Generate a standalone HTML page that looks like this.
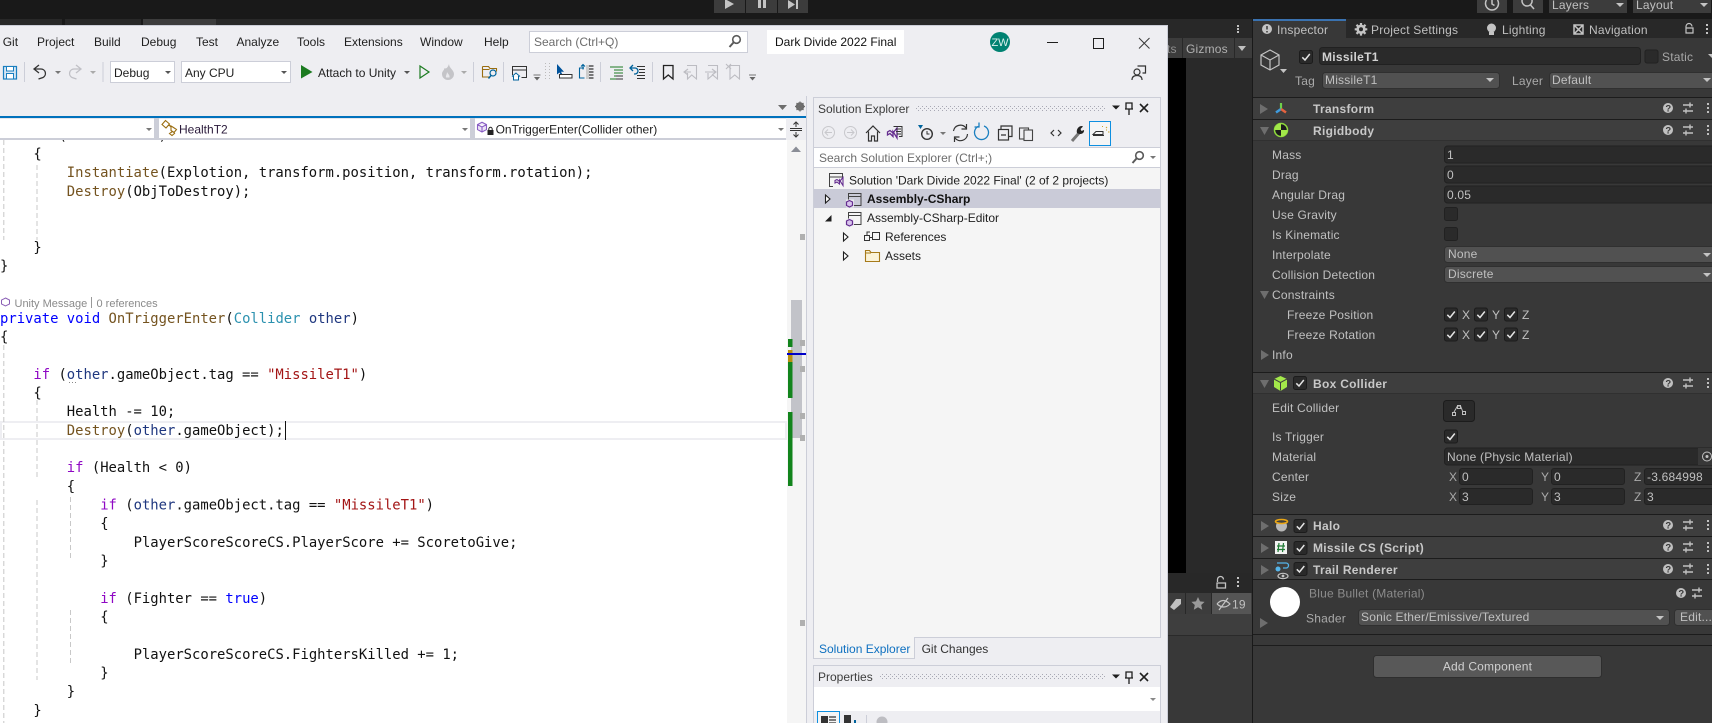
<!DOCTYPE html>
<html><head><meta charset="utf-8"><title>Unity and Visual Studio</title>
<style>
html,body{margin:0;padding:0;background:#191919;width:1712px;height:723px;overflow:hidden}
svg{display:block;position:absolute;left:0;top:0}
text{white-space:pre;font-family:"Liberation Sans",sans-serif;font-size:12px}
.v{fill:#1e1e1e}
.g{fill:#6d6d6d}
.u{fill:#c0c0c0;letter-spacing:.2px}
.b{font-weight:bold;fill:#c8c8c8;letter-spacing:.3px}
.c{font-family:"DejaVu Sans Mono","Liberation Mono",monospace;font-size:13.87px;fill:#111}
.m{fill:#74531f}.k{fill:#0000ff}.p{fill:#8f08c4}.t{fill:#2b91af}.s{fill:#a31515}.a{fill:#1f377f}
</style></head><body>
<svg width="1712" height="723" viewBox="0 0 1712 723">
<defs>
<g id="hdr"><circle cx="1668" cy="0" r="5" fill="#c0c0c0"/><text x="1665.4" y="3.6" fill="#383838" style="font-size:9.5px;font-weight:bold">?</text>
<path d="M1683 -3h10M1683 3h10M1690 -5.5v5M1686 .5v5" stroke="#c0c0c0" stroke-width="1.4" fill="none"/>
<path d="M1708 -5v2M1708 -1v2M1708 3v2" stroke="#c0c0c0" stroke-width="2"/></g>
<g id="cb"><rect x=".5" y=".5" width="13" height="13" rx="2" fill="#2a2a2a" stroke="#1c1c1c"/><path d="M3.3 7.3L6 10 10.8 4" fill="none" stroke="#e4e4e4" stroke-width="1.5"/></g>
<g id="panelbtns"><path d="M0 -2.5h8l-4 4z" fill="#1e1e1e"/><path d="M14 -5h6v6h-6zM17 1v6M13 1h8" fill="none" stroke="#1e1e1e" stroke-width="1.3"/><path d="M28 -4l8 8M36 -4l-8 8" stroke="#1e1e1e" stroke-width="1.6"/></g>
<pattern id="dots" width="4" height="4" patternUnits="userSpaceOnUse"><rect width="1" height="1" fill="#a8a8b4"/><rect x="2" y="2" width="1" height="1" fill="#a8a8b4"/></pattern>
<g id="proj"><rect x="3.5" y="-4.5" width="12.500" height="12" fill="none" stroke="#424242"/><path d="M3.500 -1.500h12.500" stroke="#424242"/><rect x="1" y="1.500" width="8" height="8" fill="#eeeef2" opacity=".9"/><path d="M4.500 2.500l3 1.500v3.500l-3 1.500-3-1.500V4z" fill="#d8c4ec" stroke="#652d90" stroke-width="1.200"/></g>
<g id="fold"><path d="M0 0h4l1.500 2H14v9H0zM0 2.500h5.500" fill="#fbf3d8" stroke="#a67a1a" stroke-width="1.100"/></g>
<clipPath id="insp"><rect x="1253" y="0" width="459" height="723"/></clipPath>
<clipPath id="top"><rect x="0" y="0" width="1712" height="13"/></clipPath>
<clipPath id="code"><rect x="0" y="140" width="787" height="583"/></clipPath>
</defs>

<!-- Unity background -->
<rect width="1712" height="723" fill="#191919"/>
<g fill="#3c3c3c">
<rect x="714" y="0" width="31" height="13"/><rect x="746" y="0" width="31" height="13"/><rect x="778" y="0" width="30" height="13"/>
<rect x="1477" y="0" width="30" height="13"/><rect x="1513" y="0" width="30" height="13"/><rect x="1549" y="0" width="78" height="13"/><rect x="1633" y="0" width="78" height="13"/>
</g>
<path d="M725 -1l9 5-9 5z" fill="#c4c4c4"/>
<path d="M758 0h3v8h-3zM763 0h3v8h-3z" fill="#c4c4c4"/>
<path d="M788 0l7 4.500-7 4.500zM796 0h2v9h-2z" fill="#c4c4c4"/>
<path d="M1486.500 0a6.500 6.500 0 1 0 11 0M1492 0v4l2.500 1.500" fill="none" stroke="#c4c4c4" stroke-width="1.500"/>
<path d="M1527 -4a5 5 0 1 0 .1 0M1530.500 5l3.500 4" fill="none" stroke="#c4c4c4" stroke-width="1.500"/>
<g clip-path="url(#top)">
<text x="1552" y="9" class="u">Layers</text><text x="1636" y="9" class="u">Layout</text>
</g>
<path d="M1616 3h8l-4 4zM1700 3h8l-4 4z" fill="#c4c4c4"/>
<rect x="0" y="19" width="62" height="6" fill="#282828"/><rect x="65" y="19" width="76" height="6" fill="#282828"/><rect x="143" y="19" width="73" height="6" fill="#3c3c3c"/>
<rect x="216" y="19" width="1036" height="6" fill="#282828"/>

<rect x="1168" y="25" width="84" height="13" fill="#282828"/>
<path d="M1238 25v2M1238 28v2M1238 31v2" stroke="#c0c0c0" stroke-width="2"/>
<rect x="1168" y="38" width="84" height="20" fill="#3c3c3c"/>
<rect x="1168" y="58" width="18" height="515" fill="#000"/>
<rect x="1186" y="58" width="66" height="515" fill="#292929"/>
<path d="M1182.500 38v20M1234.500 38v20" stroke="#282828"/>
<text x="1167" y="53" class="u" style="fill:#8e8e8e">ts</text>
<text x="1186" y="53" class="u" style="fill:#b0b0b0">Gizmos</text>
<path d="M1238 46h8l-4 5z" fill="#c0c0c0"/>
<rect x="1168" y="573" width="84" height="150" fill="#383838"/>
<rect x="1168" y="573" width="84" height="20" fill="#282828"/>
<path d="M1217.500 582v-2.500a3 3 0 0 1 6 0M1217 583h8.500v5H1217z" fill="none" stroke="#c4c4c4" stroke-width="1.300"/>
<path d="M1238 577v2M1238 581v2M1238 585v2" stroke="#c4c4c4" stroke-width="2"/>
<rect x="1168" y="593" width="84" height="21" fill="#3c3c3c"/>
<path d="M1185.500 593v21M1211.500 593v21" stroke="#282828"/>
<rect x="1212" y="593" width="39" height="21" fill="#555"/>
<path d="M1170 607l6-8h5v5l-7 6z" fill="#c0c0c0"/>
<path d="M1198 597l2 4.400 4.600.5-3.400 3.100 1 4.700-4.200-2.400-4.200 2.400 1-4.700-3.400-3.100 4.600-.5z" fill="#9a9a9a"/>
<path d="M1217 604q6-7 13 0q-6 6-13 0M1219 610l9-12" fill="none" stroke="#c4c4c4" stroke-width="1.200"/>
<text x="1232" y="608.500" class="u">19</text>
<rect x="1168" y="614" width="84" height="21" fill="#3e3e3e"/>
<path d="M1168 635.500h84" stroke="#2a2a2a"/>

<!-- Inspector -->
<rect x="1252" y="0" width="1" height="723" fill="#191919"/>
<g clip-path="url(#insp)">
<rect x="1253" y="19" width="459" height="704" fill="#383838"/>
<rect x="1253" y="19" width="459" height="19" fill="#282828"/>
<rect x="1253" y="20" width="93" height="18" fill="#383838"/>
<rect x="1253" y="19" width="93" height="2" fill="#3a72b0"/>
<circle cx="1267" cy="29" r="5" fill="#c4c4c4"/><path d="M1267 26v3.500M1267 31v1.500" stroke="#383838" stroke-width="1.500"/>
<text x="1277" y="34" class="u">Inspector</text>
<path d="M1361 23v12.600M1354.700 29.300h12.600M1356.500 24.800l9 9M1365.500 24.800l-9 9" stroke="#c4c4c4" stroke-width="2.200"/>
<circle cx="1361" cy="29.300" r="4.700" fill="#c4c4c4"/><circle cx="1361" cy="29.300" r="2" fill="#282828"/>
<text x="1371" y="34" class="u">Project Settings</text>
<circle cx="1491.500" cy="28" r="4.500" fill="#c4c4c4"/><rect x="1489" y="32" width="5" height="3" fill="#c4c4c4"/>
<text x="1502" y="34" class="u">Lighting</text>
<path d="M1574 25v9h9v-9zM1574 25l9 9M1583 25l-9 9" fill="none" stroke="#c4c4c4" stroke-width="1.500"/>
<text x="1589" y="34" class="u">Navigation</text>
<path d="M1686 28v-1.500a3 3 0 0 1 6 0M1686 28h7v5h-7z" fill="none" stroke="#c4c4c4" stroke-width="1.200"/>
<path d="M1707 24v2M1707 28v2M1707 32v2" stroke="#c4c4c4" stroke-width="2"/>

<path d="M1270 50l9 5v10l-9 5-9-5V55zM1261 55l9 5 9-5M1270 60v10" fill="none" stroke="#c4c4c4" stroke-width="1.200"/>
<path d="M1280 69h7l-3.500 4z" fill="#c4c4c4"/>
<use href="#cb" x="1299" y="50"/>
<rect x="1319.500" y="47.500" width="321" height="17" rx="3" fill="#2a2a2a" stroke="#212121"/>
<text x="1322" y="61" class="b" style="fill:#d2d2d2">MissileT1</text>
<rect x="1645" y="50" width="13" height="13" rx="2" fill="#2a2a2a" stroke="#212121"/>
<text x="1662" y="61" class="u" style="fill:#a8a8a8">Static</text>
<path d="M1708 54h8l-4 4z" fill="#c4c4c4"/>
<text x="1295" y="85" class="u" style="fill:#aaa">Tag</text>
<rect x="1322.500" y="72.500" width="177" height="16" rx="3" fill="#515151" stroke="#303030"/>
<text x="1325" y="84" class="u">MissileT1</text><path d="M1486 78h8l-4 4z" fill="#c4c4c4"/>
<text x="1512" y="85" class="u" style="fill:#aaa">Layer</text>
<rect x="1549.500" y="72.500" width="170" height="16" rx="3" fill="#515151" stroke="#303030"/>
<text x="1552" y="84" class="u">Default</text><path d="M1703 78h8l-4 4z" fill="#c4c4c4"/>

<g fill="#3e3e3e">
<rect x="1253" y="98" width="459" height="21"/><rect x="1253" y="120" width="459" height="20"/>
<rect x="1253" y="373" width="459" height="20"/><rect x="1253" y="515" width="459" height="21"/>
<rect x="1253" y="537" width="459" height="21"/><rect x="1253" y="559" width="459" height="20"/>
</g>
<path d="M1253 97.500h459M1253 119.500h459M1253 372.500h459M1253 514.500h459M1253 536.500h459M1253 558.500h459M1253 579.500h459M1253 634.500h459M1253 645.500h459" stroke="#1c1c1c"/>
<path d="M1253 140.500h459M1253 393.500h459" stroke="#303030"/>

<path d="M1260 104l8 5-8 5z" fill="#6e6e6e"/>
<path d="M1281 109v-6" stroke="#6fd14a" stroke-width="2.200"/><path d="M1281 109l-5 3.500" stroke="#3f9bdd" stroke-width="2.500"/><path d="M1281 109l5 3.500" stroke="#e4633f" stroke-width="2.500"/>
<text x="1313" y="113" class="b">Transform</text><use href="#hdr" y="108"/>
<path d="M1260 127h9l-4.500 8z" fill="#6e6e6e"/>
<circle cx="1281" cy="130" r="6.500" fill="#1c1c1c" stroke="#8fdc3c" stroke-width="1.500"/>
<path d="M1281 130v-6.500a6.500 6.500 0 0 0-6.500 6.500zM1281 130v6.500a6.500 6.500 0 0 0 6.500-6.500z" fill="#a3e84a"/>
<text x="1313" y="135" class="b">Rigidbody</text><use href="#hdr" y="130"/>

<text x="1272" y="159" class="u">Mass</text><text x="1272" y="179" class="u">Drag</text><text x="1272" y="199" class="u">Angular Drag</text><text x="1272" y="219" class="u">Use Gravity</text><text x="1272" y="239" class="u">Is Kinematic</text>
<g fill="#2a2a2a" stroke="#212121">
<rect x="1444.500" y="146" width="290" height="17" rx="3"/><rect x="1444.500" y="166" width="290" height="17" rx="3"/><rect x="1444.500" y="186" width="290" height="17" rx="3"/>
<rect x="1444.500" y="207.500" width="13" height="13" rx="2"/><rect x="1444.500" y="227.500" width="13" height="13" rx="2"/>
</g>
<text x="1447" y="159" class="u">1</text><text x="1447" y="179" class="u">0</text><text x="1447" y="199" class="u">0.05</text>
<text x="1272" y="259" class="u">Interpolate</text><text x="1272" y="279" class="u">Collision Detection</text>
<rect x="1444.500" y="246.500" width="290" height="16" rx="3" fill="#515151" stroke="#303030"/><rect x="1444.500" y="266.500" width="290" height="16" rx="3" fill="#515151" stroke="#303030"/>
<text x="1448" y="258" class="u">None</text><text x="1448" y="278" class="u">Discrete</text>
<path d="M1703 253h8l-4 4zM1703 273h8l-4 4z" fill="#c4c4c4"/>
<path d="M1260 291h9l-4.500 8z" fill="#6e6e6e"/><text x="1272" y="299" class="u">Constraints</text>
<text x="1287" y="319" class="u">Freeze Position</text><text x="1287" y="339" class="u">Freeze Rotation</text>
<use href="#cb" x="1444" y="307.500"/><use href="#cb" x="1474" y="307.500"/><use href="#cb" x="1504" y="307.500"/>
<use href="#cb" x="1444" y="327.500"/><use href="#cb" x="1474" y="327.500"/><use href="#cb" x="1504" y="327.500"/>
<text x="1462" y="319" class="u">X</text><text x="1492" y="319" class="u">Y</text><text x="1522" y="319" class="u">Z</text><text x="1462" y="339" class="u">X</text><text x="1492" y="339" class="u">Y</text><text x="1522" y="339" class="u">Z</text>
<path d="M1261 350l8 5-8 5z" fill="#6e6e6e"/><text x="1272" y="359" class="u">Info</text>

<path d="M1260 380h9l-4.500 8z" fill="#6e6e6e"/>
<path d="M1280.500 376l6.500 3v8l-6.500 4-6.500-4v-8z" fill="#a3e84a"/><path d="M1274 379l6.500 3.500 6.500-3.500M1280.500 382.500v8" stroke="#3e3e3e" fill="none"/>
<use href="#cb" x="1293" y="376"/><text x="1313" y="388" class="b">Box Collider</text><use href="#hdr" y="383"/>
<text x="1272" y="412" class="u">Edit Collider</text>
<rect x="1443.500" y="400.500" width="31" height="21" rx="3" fill="#2a2a2a" stroke="#1c1c1c"/>
<path d="M1454 412l3.500-6h3l2 5" fill="none" stroke="#c0c0c0"/><path d="M1452.500 412.500h3v3h-3zM1457.500 405.500h3v3h-3zM1462.500 411.500h3v3h-3z" fill="none" stroke="#c0c0c0"/>
<text x="1272" y="441" class="u">Is Trigger</text><use href="#cb" x="1444" y="429.500"/>
<text x="1272" y="461" class="u">Material</text>
<rect x="1444.500" y="448" width="290" height="17" rx="3" fill="#2a2a2a" stroke="#212121"/><rect x="1698" y="448" width="14" height="17" fill="#383838"/>
<text x="1447" y="461" class="u">None (Physic Material)</text>
<circle cx="1707" cy="456.500" r="4.500" fill="none" stroke="#c4c4c4"/><circle cx="1707" cy="456.500" r="1.500" fill="#c4c4c4"/>
<text x="1272" y="481" class="u">Center</text><text x="1272" y="501" class="u">Size</text>
<g fill="#2a2a2a" stroke="#212121">
<rect x="1459.500" y="468.500" width="73" height="16" rx="2.500"/><rect x="1551.500" y="468.500" width="73" height="16" rx="2.500"/><rect x="1644.500" y="468.500" width="80" height="16" rx="2.500"/>
<rect x="1459.500" y="488.500" width="73" height="16" rx="2.500"/><rect x="1551.500" y="488.500" width="73" height="16" rx="2.500"/><rect x="1644.500" y="488.500" width="80" height="16" rx="2.500"/>
</g>
<text x="1449" y="481" class="u" style="fill:#aaa">X</text><text x="1541" y="481" class="u" style="fill:#aaa">Y</text><text x="1634" y="481" class="u" style="fill:#aaa">Z</text>
<text x="1449" y="501" class="u" style="fill:#aaa">X</text><text x="1541" y="501" class="u" style="fill:#aaa">Y</text><text x="1634" y="501" class="u" style="fill:#aaa">Z</text>
<text x="1462" y="481" class="u">0</text><text x="1554" y="481" class="u">0</text><text x="1647" y="481" class="u">-3.684998</text>
<text x="1462" y="501" class="u">3</text><text x="1554" y="501" class="u">3</text><text x="1647" y="501" class="u">3</text>

<path d="M1261 521l8 5-8 5zM1261 543l8 5-8 5zM1261 565l8 5-8 5z" fill="#6e6e6e"/>
<circle cx="1281.500" cy="526" r="5.500" fill="#b8b8b8"/><ellipse cx="1281.500" cy="521.500" rx="6" ry="2" fill="#3e3e3e" stroke="#eaa614" stroke-width="1.600"/>
<rect x="1275" y="541" width="12" height="13" fill="#f2f2f2"/><path d="M1279 543l-1 9M1283.500 543l-1 9M1277 546h8M1277 549.500h8" stroke="#1f7a34" stroke-width="1.200"/>
<path d="M1277 563h9a2.500 2.500 0 0 1 0 5h-3" fill="none" stroke="#55b5ea" stroke-width="1.300"/><circle cx="1278" cy="569" r="2.500" fill="#55b5ea"/><ellipse cx="1283" cy="576" rx="5" ry="2.700" fill="none" stroke="#c4c4c4" stroke-width="1.200"/><circle cx="1283" cy="576" r="1.400" fill="#c4c4c4"/>
<use href="#cb" x="1293.500" y="519"/><use href="#cb" x="1293.500" y="541"/><use href="#cb" x="1293.500" y="562"/>
<text x="1313" y="530" class="b">Halo</text><text x="1313" y="552" class="b">Missile CS (Script)</text><text x="1313" y="574" class="b">Trail Renderer</text>
<use href="#hdr" y="525"/><use href="#hdr" y="547"/><use href="#hdr" y="569"/>

<circle cx="1285" cy="602" r="15" fill="#fff"/>
<path d="M1260 618l8 5-8 5z" fill="#6e6e6e"/>
<text x="1309" y="597.500" class="u" style="fill:#8c8c8c">Blue Bullet (Material)</text>
<text x="1306" y="622.500" class="u" style="fill:#aaa">Shader</text>
<rect x="1358.500" y="609.500" width="311" height="16" rx="3" fill="#515151" stroke="#303030"/>
<text x="1361" y="621" class="u">Sonic Ether/Emissive/Textured</text><path d="M1656 616h8l-4 4z" fill="#c4c4c4"/>
<rect x="1674.500" y="609.500" width="50" height="16" rx="3" fill="#515151" stroke="#303030"/>
<text x="1680" y="621" class="u">Edit...</text>
<circle cx="1681" cy="593" r="5" fill="#c0c0c0"/><text x="1678.400" y="596.500" fill="#383838" style="font-size:9.500px;font-weight:bold">?</text>
<path d="M1692 590h10M1692 596h10M1699 587.500v5M1695 593.500v5" stroke="#c0c0c0" stroke-width="1.400" fill="none"/>
<rect x="1373.500" y="655.500" width="228" height="22" rx="3" fill="#585858" stroke="#2e2e2e"/>
<text x="1487.500" y="670.500" text-anchor="middle" class="u" style="fill:#d0d0d0">Add Component</text>
</g>

<!-- Visual Studio window -->
<rect x="0" y="25" width="1168" height="698" fill="#eeeef2"/>
<path d="M0 25.500h1168M1167.500 25v698" stroke="#ccced8"/>
<text x="2.700" y="46" class="v">Git</text><text x="37" y="46" class="v">Project</text><text x="94" y="46" class="v">Build</text><text x="141" y="46" class="v">Debug</text><text x="196" y="46" class="v">Test</text><text x="236.500" y="46" class="v">Analyze</text><text x="297" y="46" class="v">Tools</text><text x="344" y="46" class="v">Extensions</text><text x="420" y="46" class="v">Window</text><text x="484" y="46" class="v">Help</text>
<rect x="529.500" y="31.500" width="218" height="21" fill="#fff" stroke="#ccced8"/>
<text x="534" y="46" class="g">Search (Ctrl+Q)</text>
<circle cx="736.500" cy="39.500" r="3.800" fill="none" stroke="#5a5a5a" stroke-width="1.600"/><path d="M733.500 42.500l-4 4.500" stroke="#5a5a5a" stroke-width="2"/>
<rect x="767" y="30" width="137" height="24" fill="#fff"/>
<text x="775" y="46" style="fill:#111">Dark Divide 2022 Final</text>
<circle cx="1000" cy="42" r="10" fill="#008272"/><text x="1000" y="46" text-anchor="middle" fill="#d8f0ec" style="font-size:11px">ZW</text>
<path d="M1047 42.500h11" stroke="#1e1e1e"/><rect x="1093.500" y="38.500" width="10" height="10" fill="none" stroke="#1e1e1e"/>
<path d="M1139 38l10.500 10.500M1149.500 38L1139 48.500" stroke="#3a3a3a"/>

<!-- VS toolbar -->
<rect x="3.500" y="66.500" width="13" height="12.500" fill="#d6e6f4" stroke="#1a7fc0" stroke-width="1.200"/><rect x="6.500" y="66.500" width="7" height="4.500" fill="#fff" stroke="#1a7fc0"/><rect x="6.500" y="73.500" width="7" height="5.500" fill="#fff" stroke="#1a7fc0"/>
<path d="M24.500 62v20M103 62v20M473.500 62v20M503.500 62v20M600.500 62v20M652.500 62v20M909 123v23M1040.500 123v23" stroke="#ccced8"/>
<path d="M39 65l-5 4 5 4M34 69h7a4.500 4.500 0 0 1 2 8.500l-4.500 1.500" fill="none" stroke="#333" stroke-width="1.300"/>
<path d="M55 71h6l-3 3z" fill="#777"/>
<path d="M76 65l5 4-5 4M81 69h-7a4.500 4.500 0 0 0-2 8.500l4.500 1.500" fill="none" stroke="#c0c0c6" stroke-width="1.300"/>
<path d="M90 71h6l-3 3z" fill="#aaa"/>
<rect x="110.500" y="61.500" width="64" height="21" fill="#fff" stroke="#ccced8"/><text x="114" y="77" class="v">Debug</text><path d="M165 71h6l-3 3z" fill="#555"/>
<rect x="181.500" y="61.500" width="109" height="21" fill="#fff" stroke="#ccced8"/><text x="185" y="77" class="v">Any CPU</text><path d="M281 71h6l-3 3z" fill="#555"/>
<path d="M301 65l11.500 7-11.500 6.500z" fill="#1c7b21"/>
<text x="318" y="77" class="v">Attach to Unity</text><path d="M404 71h6l-3 3z" fill="#555"/>
<path d="M420 66l9 6-9 6z" fill="none" stroke="#1c7b21" stroke-width="1.200"/>
<path d="M449 64c0 4 5 6 5 10a6 6 0 0 1-12 0c0-3 2-3 2.500-6 1 1 3 .5 4.500-4z" fill="#c4c4c8"/><path d="M447 72c1 2 3 3 2.500 5.500h-3.500c-.5-2 1-3 1-5.500z" fill="#e8e8ec"/><path d="M461 71h6l-3 3z" fill="#aaa"/>
<path d="M482.500 66.500h6l1.500 2h6.500v3M482.500 66.500v10.500h7M482.500 69.500h7" fill="none" stroke="#9a6d10" stroke-width="1.100"/>
<circle cx="493" cy="73" r="3" fill="#eeeef2" stroke="#00639c" stroke-width="1.200"/><path d="M491 75.500l-2.500 3" stroke="#00639c" stroke-width="1.400"/>
<path d="M517 66.500h9.500v11h-5M512.500 75v-8.500h5M512.500 70h14" fill="none" stroke="#333"/><path d="M512 76.500l4-3.500 4 3.500M513.500 76v4h5v-4" fill="#fff" stroke="#00639c"/>
<path d="M533.500 75h7" stroke="#777"/><path d="M534 77h6l-3 3.500z" fill="#666"/>
<path d="M545.500 63v17M549.500 63v17" stroke="#bbb" stroke-dasharray="1 2"/>
<path d="M557 64v10.500l2.500-2 1.500 3 1.500-.7-1.500-3h3z" fill="#00539c"/><rect x="559.500" y="74.500" width="12.500" height="3.500" fill="#fff" stroke="#333"/>
<path d="M584 68h-4.500v10h5M583 64.500v5M581 66.500l2-2 2 2" fill="none" stroke="#00639c" stroke-width="1.100"/><path d="M587 66h6.500M587 69h6.500M587 72h6.500M587 75h6.500M587 78h6.500" stroke="#333" stroke-width="1.200"/><rect x="586" y="65" width="3" height="14" fill="#ccc"/>
<path d="M610 67h13M614 70h9M614 73h9M614 76h9M610 79h13" stroke="#1c7b21" stroke-width="1"/><path d="M616 79h7M616 76h7" stroke="#333"/>
<path d="M637 66.500h8M639 69.500h6M639 72.500h6M637 75.500h8M637 78.500h8" stroke="#333"/><path d="M633 65l-3 3 3 3M630 68h5a3 3 0 0 1 0 6h-1" fill="none" stroke="#00639c" stroke-width="1.300"/>
<path d="M663.500 65.500h9.500v13.500l-4.750-4-4.750 4z" fill="none" stroke="#222" stroke-width="1.300"/>
<path d="M687 65.500h9.500v13.500l-4.750-4-4.250 4v-6M688 69l-4 3 4 3M684 72h7" fill="none" stroke="#bcbcc2" stroke-width="1.100"/>
<path d="M708 65.500h9.500v13.500l-4.750-4-4.750 4v-6M712 69l4 3-4 3M716 72h-11" fill="none" stroke="#bcbcc2" stroke-width="1.100"/>
<path d="M730 65.500h9.500v13.500l-4.750-4-4.750 4zM726 64l5 5M731 64l-5 5" fill="none" stroke="#bcbcc2" stroke-width="1.100"/>
<path d="M749 75h7" stroke="#777"/><path d="M749.500 77h6l-3 3.500z" fill="#666"/>
<circle cx="1137" cy="72" r="3" fill="none" stroke="#333" stroke-width="1.200"/><path d="M1132 80c0-3.500 2-4.500 5-4.500s5 1 5 4.500M1137.500 66h8v7h-3" fill="none" stroke="#333" stroke-width="1.200"/>

<!-- tab well and nav bar -->
<path d="M778 105h9l-4.500 5z" fill="#6d6d6d"/>
<circle cx="800" cy="106.500" r="3" fill="none" stroke="#6d6d6d" stroke-width="2.500"/><path d="M800 101.500v10M795 106.500h10M796.500 103l7 7M803.500 103l-7 7" stroke="#6d6d6d" stroke-width="1.200"/>
<rect x="0" y="116" width="806" height="2.500" fill="#0071bc"/>
<rect x="0" y="118" width="806" height="22" fill="#ccced8"/>
<rect x="0" y="118.500" width="154" height="19.500" fill="#fff"/><rect x="159" y="118.500" width="311" height="19.500" fill="#fff"/><rect x="475" y="118.500" width="311" height="19.500" fill="#fff"/><rect x="786" y="118" width="20" height="22" fill="#eeeef2"/>
<path d="M146 128h6l-3 3zM462 128h6l-3 3zM778 128h6l-3 3z" fill="#777"/>
<path d="M162 124.500l3.500-4 4 3.500-3.500 4zM171 126l2.500 1.500 3 2-2.500 3-3-2zM172.500 131.500l-3 2 2.500 2 3-2.500M169 125l2 2" fill="#fff" stroke="#9a6d10" stroke-width="1.100"/>
<text x="179" y="133.500" fill="#2a1a3a">HealthT2</text>
<path d="M482 122.300l4.500 2.300v5l-4.500 2.400-4.500-2.400v-5zM477.500 124.600l4.500 2.400 4.500-2.400M482 127v5" fill="#ece4f6" stroke="#8a5fc5" stroke-width="1.100"/>
<path d="M488.800 130v-1a1.700 1.700 0 0 1 3.400 0v1" fill="none" stroke="#222"/><rect x="487.500" y="130" width="6" height="5" fill="#222"/>
<text x="495.600" y="133.500" class="v">OnTriggerEnter(Collider other)</text>
<path d="M790 128.500h12M790 130.500h12M796 122v5M793.500 124.500l2.500-2.500 2.500 2.500M796 132v5M793.500 134.500l2.500 2.500 2.500-2.500" fill="none" stroke="#333" stroke-width="1"/>

<!-- code -->
<rect x="0" y="140" width="787" height="583" fill="#fff"/>
<rect x="787" y="140" width="19" height="583" fill="#f5f5f5"/>
<path d="M791 152l5-5.500 5 5.500z" fill="#8a8d96"/>
<rect x="791" y="300" width="11" height="138" fill="#c2c3c9"/>
<rect x="1" y="422" width="785" height="17" fill="#fff" stroke="#eeeef2" stroke-width="2"/>
<path d="M3.800 140V240M37 165V240M3.800 345V723M37 400V480M37 500V680M70.500 497V560M70.500 610V665" stroke="#c8c8c8" stroke-dasharray="5 3" fill="none"/>
<g clip-path="url(#code)">
<text x="33.400" y="140" class="c"><tspan class="p">if</tspan> (Health &lt;= 0)</text>
<text x="33.400" y="158.500" class="c">{</text>
<text x="66.800" y="177" class="c"><tspan class="m">Instantiate</tspan>(Explotion, transform.position, transform.rotation);</text>
<text x="66.800" y="195.800" class="c"><tspan class="m">Destroy</tspan>(ObjToDestroy);</text>
<text x="33.400" y="251.800" class="c">}</text>
<text x="0" y="270.500" class="c">}</text>
<path d="M5.500 298l4 2v4l-4 2-4-2v-4z" fill="none" stroke="#8a5fb5"/>
<text x="14.500" y="307" style="fill:#8a8a8a;font-size:11px">Unity Message</text>
<path d="M91.500 297v11" stroke="#999"/>
<text x="96.500" y="307" style="fill:#8a8a8a;font-size:11px">0 references</text>
<text x="0" y="323" class="c"><tspan class="k">private</tspan> <tspan class="k">void</tspan> <tspan class="m">OnTriggerEnter</tspan>(<tspan class="t">Collider</tspan> <tspan class="a">other</tspan>)</text>
<text x="0" y="341.500" class="c">{</text>
<text x="33.400" y="379" class="c"><tspan class="p">if</tspan> (<tspan class="a">other</tspan>.gameObject.tag == <tspan class="s">"MissileT1"</tspan>)</text>
<path d="M69 382.500h9" stroke="#888" stroke-dasharray="1 2"/>
<text x="33.400" y="397.500" class="c">{</text>
<text x="66.800" y="416" class="c">Health -= 10;</text>
<text x="66.800" y="435" class="c"><tspan class="m">Destroy</tspan>(<tspan class="a">other</tspan>.gameObject);</text>
<path d="M285.500 421v19" stroke="#111"/>
<text x="66.800" y="472" class="c"><tspan class="p">if</tspan> (Health &lt; 0)</text>
<text x="66.800" y="491" class="c">{</text>
<text x="100.200" y="509.500" class="c"><tspan class="p">if</tspan> (<tspan class="a">other</tspan>.gameObject.tag == <tspan class="s">"MissileT1"</tspan>)</text>
<text x="100.200" y="528" class="c">{</text>
<text x="133.600" y="547" class="c">PlayerScoreScoreCS.PlayerScore += ScoretoGive;</text>
<text x="100.200" y="565.500" class="c">}</text>
<text x="100.200" y="603" class="c"><tspan class="p">if</tspan> (Fighter == <tspan class="k">true</tspan>)</text>
<text x="100.200" y="621.500" class="c">{</text>
<text x="133.600" y="659" class="c">PlayerScoreScoreCS.FightersKilled += 1;</text>
<text x="100.200" y="677.500" class="c">}</text>
<text x="66.800" y="696" class="c">}</text>
<text x="33.400" y="715" class="c">}</text>
</g>
<!-- scroll marks -->
<g fill="#b0b0b0"><rect x="800" y="234" width="5" height="6"/><rect x="800" y="340" width="5" height="6"/><rect x="800" y="366" width="5" height="6"/><rect x="800" y="413" width="5" height="6"/><rect x="800" y="435" width="5" height="6"/><rect x="800" y="620" width="5" height="6"/></g>
<g fill="#12841c"><rect x="788" y="339" width="4.500" height="8"/><rect x="788" y="362" width="4.500" height="36"/><rect x="788" y="412" width="4.500" height="74"/></g>
<rect x="788" y="350" width="4.500" height="12" fill="#b8900f"/>
<rect x="787" y="353" width="19" height="2" fill="#0000c8"/>

<!-- Solution explorer -->
<rect x="806" y="96" width="1" height="627" fill="#ccced8"/>
<rect x="813.500" y="97.500" width="347" height="540" fill="#f5f5f5" stroke="#ccced8"/>
<rect x="814" y="98" width="346" height="49" fill="#eeeef2"/>
<text x="818" y="113" style="fill:#3c3c3c">Solution Explorer</text>
<rect x="916" y="105" width="189" height="6" fill="url(#dots)"/>
<use href="#panelbtns" x="1112" y="108"/>
<circle cx="828.500" cy="132.500" r="6" fill="none" stroke="#c8c8cc"/><path d="M832 132.500h-7M828 129.500l-3 3 3 3" fill="none" stroke="#c8c8cc"/>
<circle cx="850.500" cy="132.500" r="6" fill="none" stroke="#c8c8cc"/><path d="M847 132.500h7M851 129.500l3 3-3 3" fill="none" stroke="#c8c8cc"/>
<path d="M866 133l7-7 7 7M868.500 131.500V141h3v-5h3v5h3v-9.500" fill="none" stroke="#333" stroke-width="1.200"/>
<path d="M887.500 135l2.500-1.500 3 3v-5l4 6.500v-10l-4 5-3-2.500-2.500 1.500z" fill="#eee" stroke="#652d90" stroke-width="1.300"/>
<path d="M894 127v-.500h8v10h-3" fill="none" stroke="#333"/><path d="M896 129h5M896 131.500h5M897 134h4" stroke="#333"/>
<circle cx="927" cy="134" r="5.300" fill="none" stroke="#333" stroke-width="1.400"/><path d="M927 131v3h2.500" fill="none" stroke="#333"/><path d="M918 125h5l-2.500 4z" fill="#00639c"/>
<path d="M940 132h6l-3 3z" fill="#777"/>
<path d="M953.500 131a7 7 0 0 1 12.500-3M967.500 134a7 7 0 0 1-12.500 4M966.500 124v5h-5M954.500 142v-5h5" fill="none" stroke="#333" stroke-width="1.200"/>
<path d="M979 126a7 7 0 1 0 5 0M979 122.500v4.500h-4.500" fill="none" stroke="#1a7fc0" stroke-width="1.300"/>
<rect x="998.500" y="129.500" width="10" height="10.500" fill="#eeeef2" stroke="#333" stroke-width="1.200"/><path d="M1001 129.500v-3.500h11v10.500h-3.500M1001 135h5" fill="none" stroke="#333" stroke-width="1.200"/>
<rect x="1019.500" y="128" width="9" height="11" fill="#eeeef2" stroke="#444" stroke-width="1.100"/><rect x="1024" y="130" width="8.500" height="10.500" fill="#eeeef2" stroke="#444" stroke-width="1.100"/>
<path d="M1054 130l-3 3 3 3M1058 130l3 3-3 3" fill="none" stroke="#333" stroke-width="1.200"/>
<path d="M1072 141l7-8" stroke="#777" stroke-width="3"/><path d="M1077 133c-1-3 1-7 5-7l1 .5-2.500 2.500 1 2 2.500-1c.5 3-3 5-6 3.500z" fill="#222"/>
<rect x="1089.500" y="121.500" width="21" height="24" fill="#f5f5f5" stroke="#0e8fe0"/>
<path d="M1093 134.500h10v-3h-7zM1093 135.500h11" fill="none" stroke="#333"/><path d="M1106 130h1M1108 132h1.500M1106 127l1 1M1102.500 126v1" stroke="#c9a227"/>

<rect x="814" y="147.500" width="346" height="20" fill="#fff"/>
<path d="M814 147.500h346M814 167.500h346" stroke="#ccced8"/>
<text x="819" y="162" class="g">Search Solution Explorer (Ctrl+;)</text>
<circle cx="1139.500" cy="155.500" r="3.800" fill="none" stroke="#5a5a5a" stroke-width="1.600"/><path d="M1136.500 158.500l-4 4.500" stroke="#5a5a5a" stroke-width="2"/>
<path d="M1150 156h6l-3 3z" fill="#777"/>
<path d="M833 186.500h-3.500v-13h13v8M829.500 177h13" fill="none" stroke="#424242"/>
<path d="M835 183l2-1 2.500 2v-4l3.500 5.500v-8l-3.500 4-2.500-2-2 1z" fill="#eee" stroke="#652d90" stroke-width="1.100"/>
<text x="849" y="184.500" class="v">Solution 'Dark Divide 2022 Final' (2 of 2 projects)</text>
<rect x="814" y="189" width="346" height="19" fill="#cacbd8"/>
<path d="M825.500 195l4.500 4-4.500 4z" fill="#fff" stroke="#1e1e1e" stroke-width="1.100"/>
<use href="#proj" x="845" y="198"/>
<text x="867" y="203" class="v" style="font-weight:bold;fill:#111">Assembly-CSharp</text>
<path d="M825 221.500h6.500V215z" fill="#1e1e1e"/>
<use href="#proj" x="845" y="217"/>
<text x="867" y="222" class="v">Assembly-CSharp-Editor</text>
<path d="M843.500 233l4.500 4-4.500 4z" fill="#fff" stroke="#1e1e1e" stroke-width="1.100"/>
<path d="M843.500 252l4.500 4-4.500 4z" fill="#fff" stroke="#1e1e1e" stroke-width="1.100"/>
<rect x="864.500" y="235.500" width="5" height="5" fill="#f5f5f5" stroke="#333"/><rect x="872.500" y="232.500" width="7" height="7" fill="#f5f5f5" stroke="#333"/><path d="M869.500 237.500h3M867 235v-3h3" stroke="#333" fill="none"/>
<text x="885" y="241" class="v">References</text>
<use href="#fold" x="865.500" y="250.500"/>
<text x="885" y="260" class="v">Assets</text>

<rect x="814" y="638" width="346" height="27" fill="#eeeef2"/>
<path d="M813.500 638v20.500H914.500V638" fill="#f5f5f5" stroke="#ccced8"/>
<rect x="814" y="636" width="100" height="3" fill="#f5f5f5"/>
<text x="819" y="653" style="fill:#0e70c0">Solution Explorer</text>
<text x="921.600" y="653" style="fill:#333">Git Changes</text>

<!-- Properties -->
<rect x="813.500" y="665.500" width="347" height="60" fill="#eeeef2" stroke="#ccced8"/>
<text x="818" y="681" style="fill:#3c3c3c">Properties</text>
<rect x="879" y="674" width="226" height="6" fill="url(#dots)"/>
<use href="#panelbtns" x="1112" y="677"/>
<rect x="814" y="687" width="346" height="24" fill="#fff"/>
<path d="M1150 698h6l-3 3z" fill="#888"/>
<rect x="817.500" y="711.500" width="22" height="16" fill="#f5f5f5" stroke="#0e8fe0"/>
<rect x="821" y="716" width="7" height="7" fill="#333"/><path d="M829 717h7M829 720h7M829 723h7" stroke="#333" stroke-width="1.300"/>
<rect x="844" y="715" width="7" height="9" fill="#333"/><rect x="854" y="720" width="2" height="3" fill="#00639c"/>
<path d="M866.500 715v8" stroke="#ccced8"/>
<circle cx="882" cy="722" r="5.500" fill="#bdbdc2"/>
</svg>
</body></html>
